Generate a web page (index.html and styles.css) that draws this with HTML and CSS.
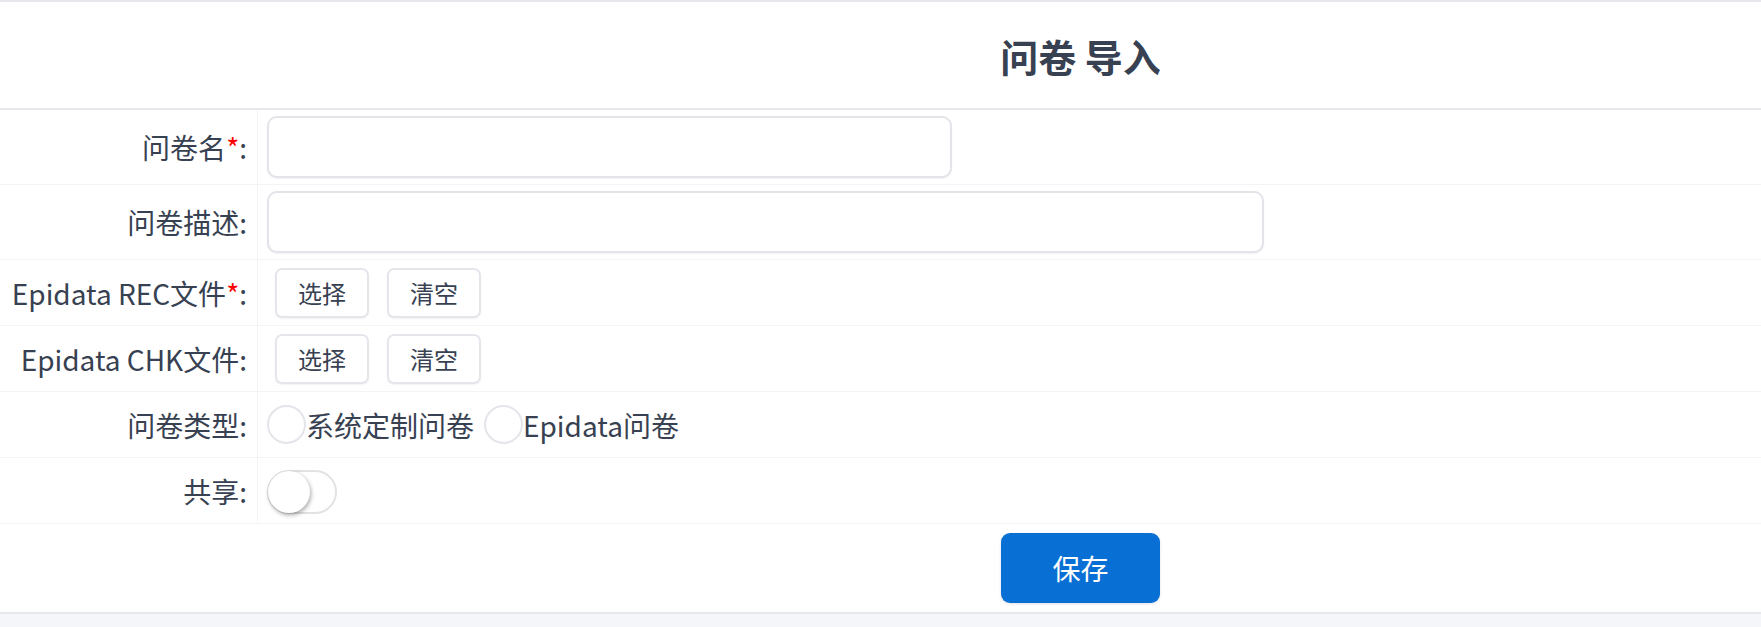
FILE: index.html
```html
<!DOCTYPE html>
<html lang="zh-CN">
<head>
    <meta charset="UTF-8">
    <meta name="viewport" content="width=device-width, initial-scale=1.0">
    <title>问卷 导入</title>
    <link rel="stylesheet" href="styles.css">
</head>
<body>

    <!-- Tarjeta principal -->
    <div class="page">
        <div class="header">
            <h1>问卷 导入</h1>
        </div>

        <div class="row tall">
            <label class="cell-label">问卷名<span class="req">*</span>:</label>
            <div class="cell-field">
                <input type="text" class="input short">
            </div>
        </div>

        <div class="row tall">
            <label class="cell-label">问卷描述:</label>
            <div class="cell-field">
                <input type="text" class="input long">
            </div>
        </div>

        <div class="row">
            <label class="cell-label">Epidata REC文件<span class="req">*</span>:</label>
            <div class="cell-field buttons">
                <button class="btn">选择</button>
                <button class="btn">清空</button>
            </div>
        </div>

        <div class="row">
            <label class="cell-label">Epidata CHK文件:</label>
            <div class="cell-field buttons">
                <button class="btn">选择</button>
                <button class="btn">清空</button>
            </div>
        </div>

        <div class="row">
            <label class="cell-label">问卷类型:</label>
            <div class="cell-field radios">
                <span class="radio"></span><span class="radio-text">系统定制问卷</span>
                <span class="radio"></span><span class="radio-text">Epidata问卷</span>
            </div>
        </div>

        <div class="row">
            <label class="cell-label">共享:</label>
            <div class="cell-field">
                <span class="switch"><span class="knob"></span></span>
            </div>
        </div>

        <div class="footer">
            <button class="save">保存</button>
        </div>
    </div>

</body>
</html>
```

FILE: styles.css
```css
/* Estilo global */
* {
    margin: 0;
    padding: 0;
    box-sizing: border-box;
}

body {
    font-family: "Noto Sans CJK SC", "Noto Sans", sans-serif;
    background-color: #f5f6f9;
    color: #374151;
    min-height: 100vh;
}

.page {
    background-color: #ffffff;
    border-top: 2px solid #e5e7eb;
    border-bottom: 2px solid #e5e7eb;
}

/* Cabecera */
.header {
    height: 108px;
    border-bottom: 2px solid #e5e7eb;
    display: flex;
    align-items: center;
    justify-content: center;
    padding-left: 400px;
}

.header h1 {
    font-size: 38px;
    font-weight: 700;
    color: #374151;
    letter-spacing: 0;
}

/* Filas del formulario */
.row {
    display: grid;
    grid-template-columns: 258px 1fr;
    height: 66px;
    border-bottom: 1.5px solid #f3f4f6;
}

.row.tall {
    height: 75px;
}

.cell-label {
    display: flex;
    align-items: center;
    justify-content: flex-end;
    padding-right: 10px;
    font-size: 28px;
    border-right: 1.5px solid #f3f4f6;
    white-space: nowrap;
}

.req {
    color: #ff0000;
}

.cell-field {
    display: flex;
    align-items: center;
    padding-left: 9px;
}

.input {
    height: 62px;
    border: 2px solid #e3e4ea;
    border-radius: 10px;
    background-color: #ffffff;
    box-shadow: 0 1px 2px rgba(0, 0, 0, 0.06);
}

.input.short {
    width: 685px;
}

.input.long {
    width: 997px;
}

/* Botones */
.buttons {
    gap: 18px;
    padding-left: 17px;
}

.btn {
    width: 94px;
    height: 50px;
    border: 2px solid #e5e6ec;
    border-radius: 7px;
    background-color: #ffffff;
    color: #374151;
    font-family: inherit;
    font-size: 24px;
    box-shadow: 0 1px 2px rgba(0, 0, 0, 0.05);
}

/* Radios */
.radio {
    width: 39px;
    height: 39px;
    border: 2px solid #e3e5ea;
    border-radius: 50%;
    background-color: #ffffff;
    flex-shrink: 0;
}

.radio-text {
    font-size: 28px;
    margin-right: 10px;
}

/* Interruptor */
.switch {
    position: relative;
    width: 70px;
    height: 44px;
    border: 2px solid #e2e2e4;
    border-radius: 22px;
    background-color: #ffffff;
    margin-top: 2px;
}

.knob {
    position: absolute;
    left: -1px;
    top: -1px;
    width: 42px;
    height: 42px;
    border-radius: 50%;
    background-color: #ffffff;
    box-shadow: 1px 2px 4px rgba(0, 0, 0, 0.35);
}

/* Pie */
.footer {
    height: 88px;
    display: flex;
    align-items: center;
    justify-content: center;
    padding-left: 400px;
}

.save {
    width: 159px;
    height: 70px;
    border: none;
    border-radius: 9px;
    background-color: #0870d4;
    color: #ffffff;
    font-family: inherit;
    font-size: 28px;
    box-shadow: 0 1px 3px rgba(0, 0, 0, 0.12);
}
```
